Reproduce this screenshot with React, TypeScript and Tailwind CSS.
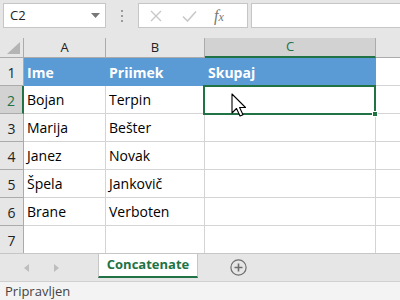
import React from "react";

const rows: [string, string][] = [
  ["Bojan", "Terpin"],
  ["Marija", "Bešter"],
  ["Janez", "Novak"],
  ["Špela", "Jankovič"],
  ["Brane", "Verboten"],
  ["", ""],
];

export default function App() {
  return (
    <div
      className="w-[400px] h-[300px] overflow-hidden bg-[#e6e6e6] flex flex-col"
      style={{ fontFamily: '"Segoe UI", "Open Sans", "Noto Sans", sans-serif' }}
    >
      {/* Toolbar */}
      <div className="h-[38px] flex items-start pt-[3px] pl-[3px] shrink-0">
        <div className="w-[103px] h-[25px] bg-white border border-[#c6c6c6] flex items-center justify-between pl-[6px] pr-[5px]">
          <span className="text-[13px] text-[#222]">C2</span>
          <svg width="9" height="5" viewBox="0 0 9 5">
            <path d="M0 0 L9 0 L4.5 5 Z" fill="#777" />
          </svg>
        </div>
        <div className="w-[32px] h-[25px] flex flex-col items-center justify-center gap-[3px]">
          <div className="w-[2px] h-[2px] bg-[#9a9a9a]" />
          <div className="w-[2px] h-[2px] bg-[#9a9a9a]" />
          <div className="w-[2px] h-[2px] bg-[#9a9a9a]" />
        </div>
        <div className="w-[110px] h-[25px] bg-white border border-[#c6c6c6] flex items-center">
          <svg className="ml-[11px]" width="12" height="12" viewBox="0 0 12 12">
            <path d="M1 1 L11 11 M11 1 L1 11" stroke="#c8c8c8" strokeWidth="1.4" />
          </svg>
          <svg className="ml-[20px]" width="15" height="12" viewBox="0 0 15 12">
            <path d="M1 6.5 L5.5 11 L14 1.5" stroke="#c8c8c8" strokeWidth="1.6" fill="none" />
          </svg>
          <span
            className="ml-[17px] text-[16px] italic text-[#777]"
            style={{ fontFamily: '"Liberation Serif", serif' }}
          >
            f<span className="text-[12px]">x</span>
          </span>
        </div>
        <div className="ml-[3px] flex-1 h-[25px] bg-white border border-[#c6c6c6] border-r-0" />
      </div>

      {/* Sheet */}
      <div className="relative h-[215px] overflow-hidden bg-white shrink-0">
        <div className="grid grid-cols-[24px_82px_99px_171px_1fr]">
          {/* header row */}
          <div className="h-[20px] bg-[#e6e6e6] border-r border-b border-[#ababab] flex items-end justify-end pr-[3px] pb-[3px]">
            <svg width="13" height="12" viewBox="0 0 13 12">
              <path d="M13 0 L13 12 L0 12 Z" fill="#b4b4b4" />
            </svg>
          </div>
          <div className="h-[20px] bg-[#e6e6e6] border-r border-b border-[#ababab] flex items-center justify-center text-[13px] text-[#222]">A</div>
          <div className="h-[20px] bg-[#e6e6e6] border-r border-b border-[#ababab] flex items-center justify-center text-[13px] text-[#222]">B</div>
          <div className="h-[20px] bg-[#d2d2d2] border-r border-[#ababab] border-b-2 border-b-[#217346] flex items-center justify-center text-[13px] text-[#217346]">C</div>
          <div className="h-[20px] bg-[#e6e6e6] border-b border-[#ababab]" />

          {/* row 1 */}
          <div className="h-[28px] bg-[#e6e6e6] border-r border-b border-[#ababab] flex items-end justify-center pb-[2px] text-[14px] text-[#222]">1</div>
          <div className="h-[28px] bg-[#5b9bd5] flex items-center pl-[3px] text-[14px] font-bold text-white">Ime</div>
          <div className="h-[28px] bg-[#5b9bd5] flex items-center pl-[3px] text-[14px] font-bold text-white">Priimek</div>
          <div className="h-[28px] bg-[#5b9bd5] flex items-center pl-[3px] text-[14px] font-bold text-white">Skupaj</div>
          <div className="h-[28px] bg-white border-b border-[#d4d4d4]" />

          {rows.map(([a, b], i) => {
            const n = i + 2;
            const sel = n === 2;
            return (
              <React.Fragment key={n}>
                <div
                  className={
                    sel
                      ? "h-[28px] bg-[#d2d2d2] border-b border-[#ababab] border-r-2 border-r-[#217346] flex items-end justify-center pb-[2px] text-[14px] text-[#217346]"
                      : "h-[28px] bg-[#e6e6e6] border-r border-b border-[#ababab] flex items-end justify-center pb-[2px] text-[14px] text-[#222]"
                  }
                >
                  {n}
                </div>
                <div className="h-[28px] border-r border-b border-[#d4d4d4] flex items-center pl-[3px] text-[14px] text-black">{a}</div>
                <div className="h-[28px] border-r border-b border-[#d4d4d4] flex items-center pl-[3px] text-[14px] text-black">{b}</div>
                <div className="h-[28px] border-r border-b border-[#d4d4d4]" />
                <div className="h-[28px] border-b border-[#d4d4d4]" />
              </React.Fragment>
            );
          })}
        </div>

        {/* selection C2 */}
        <div className="absolute left-[203px] top-[47px] w-[173px] h-[30px] border-2 border-[#217346]">
          <div className="absolute right-[-4px] bottom-[-4px] w-[6px] h-[6px] bg-[#217346] border border-white" />
        </div>

        {/* cursor */}
        <svg className="absolute left-[231px] top-[55px]" width="16" height="25" viewBox="0 0 16 25">
          <path d="M1 1 L1 20 L5.5 15.5 L9 23 L12 21.7 L8.6 14.5 L14.5 14.5 Z" fill="white" stroke="black" strokeWidth="1.1" strokeLinejoin="round" />
        </svg>
      </div>

      {/* Tab bar */}
      <div className="h-[28px] border-t border-[#c6c6c6] bg-[#e6e6e6] flex items-stretch shrink-0">
        <div className="w-[98px] flex items-center">
          <svg className="ml-[24px]" width="5" height="8" viewBox="0 0 5 8">
            <path d="M5 0 L0 4 L5 8 Z" fill="#bdbdbd" />
          </svg>
          <svg className="ml-[25px]" width="5" height="8" viewBox="0 0 5 8">
            <path d="M0 0 L5 4 L0 8 Z" fill="#bdbdbd" />
          </svg>
        </div>
        <div className="w-[100px] bg-white border-l border-r border-[#c6c6c6] border-b-2 border-b-[#217346] flex items-center justify-center text-[13px] font-bold text-[#217346] mb-[3px]">
          Concatenate
        </div>
        <div className="flex-1 flex items-center pl-[32px]">
          <svg width="17" height="17" viewBox="0 0 17 17">
            <circle cx="8.5" cy="8.5" r="7.6" fill="none" stroke="#6d6d6d" strokeWidth="1.2" />
            <path d="M8.5 4.5 V12.5 M4.5 8.5 H12.5" stroke="#6d6d6d" strokeWidth="1.6" />
          </svg>
        </div>
      </div>

      {/* Status bar */}
      <div className="flex-1 bg-[#f3f3f3] border-t border-[#d0d0d0] flex items-center pl-[5px] text-[13px] text-[#444]">
        Pripravljen
      </div>
    </div>
  );
}
